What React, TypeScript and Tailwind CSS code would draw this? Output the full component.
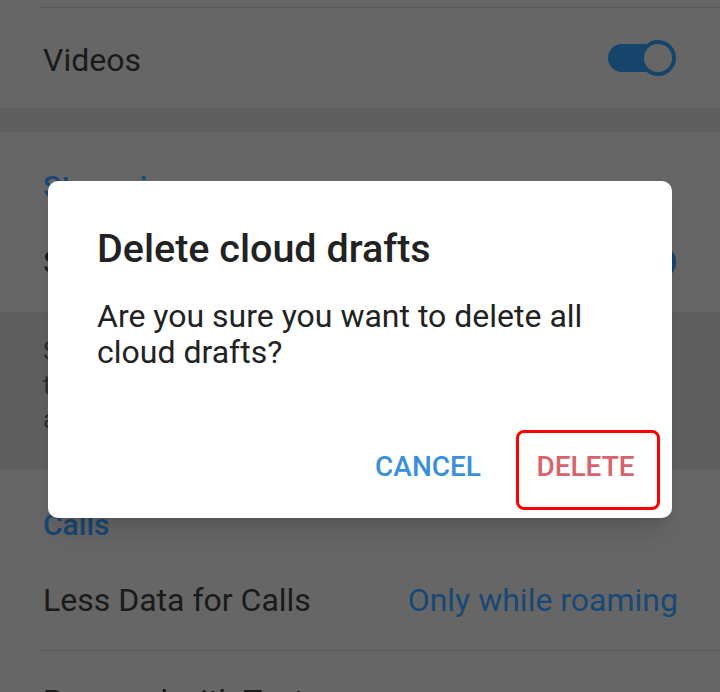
import React from "react";

const Toggle: React.FC = () => (
  <div className="relative w-[68px] h-[36px] flex items-center">
    <div className="w-[50px] h-[28px] rounded-full bg-[#17446b]" />
    <div className="absolute right-0 top-0 w-[36px] h-[36px] rounded-full border-[4px] border-[#17446b] bg-[#666666]" />
  </div>
);

const SectionHeader: React.FC<{ title: string }> = ({ title }) => (
  <div className="pt-[40px] pb-[10px] pl-[43px] h-[80px]">
    <div className="text-[30px] leading-[30px] font-medium text-[#184773]">
      {title}
    </div>
  </div>
);

const App: React.FC = () => {
  return (
    <div
      className="relative w-[720px] h-[692px] overflow-hidden bg-[#666666] text-[#1a1a1a]"
      style={{ fontFamily: "Roboto, 'Noto Sans', sans-serif" }}
    >
      {/* settings list underneath the dialog */}
      <div className="flex flex-col">
        <div className="h-[7px]" />
        <div className="ml-[40px] h-px bg-[#5a5a5a]" />
        <div className="h-[100px] flex items-center justify-between pl-[43px] pr-[44px]">
          <span className="text-[32px] leading-[40px] pt-[4px]">Videos</span>
          <Toggle />
        </div>
        <div className="h-[24px] bg-[#5f5f5f]" />

        <SectionHeader title="Streaming" />
        <div className="h-[100px] flex items-center justify-between pl-[43px] pr-[44px]">
          <span className="text-[32px]">Stream Videos and Audio Files</span>
          <Toggle />
        </div>
        <div className="h-[158px] bg-[#5f5f5f] pl-[43px] pt-[23px] text-[25px] leading-[34px] text-[#2b2b2b]">
          <div>Some videos and audio files can be played</div>
          <div>the moment you open them, without waiting</div>
          <div>a full download to finish.</div>
        </div>

        <SectionHeader title="Calls" />
        <div className="h-[100px] flex items-center justify-between pl-[43px] pr-[42px]">
          <span className="text-[32px]">Less Data for Calls</span>
          <span className="text-[32px] text-[#184875]">Only while roaming</span>
        </div>
        <div className="ml-[40px] h-px bg-[#5a5a5a]" />
        <div className="h-[100px] flex items-center pl-[43px]">
          <span className="text-[32px]">Respond with Text</span>
        </div>
      </div>

      {/* dialog */}
      <div className="absolute left-[48px] top-[181px] w-[624px] h-[337px] bg-white rounded-[10px] shadow-xl flex flex-col">
        <div className="pt-[46px] px-[49px]">
          <h2 className="text-[39.5px] leading-[44px] font-medium text-[#222222]">
            Delete cloud drafts
          </h2>
          <p className="mt-[27px] text-[32px] leading-[36px] text-[#222222]">
            Are you sure you want to delete all
            <br />
            cloud drafts?
          </p>
        </div>
        <div className="mt-auto mb-[8px] pr-[12px] flex justify-end gap-[12px]">
          <button className="h-[80px] px-[20px] pb-[6px] text-[28px] font-medium text-[#3a90dc] border-[3px] border-transparent">
            CANCEL
          </button>
          <button className="h-[80px] w-[144px] pb-[6px] pr-[5px] text-[28px] font-medium text-[#d8636c] border-[3px] border-[#ff0000] rounded-lg">
            DELETE
          </button>
        </div>
      </div>
    </div>
  );
};

export default App;
